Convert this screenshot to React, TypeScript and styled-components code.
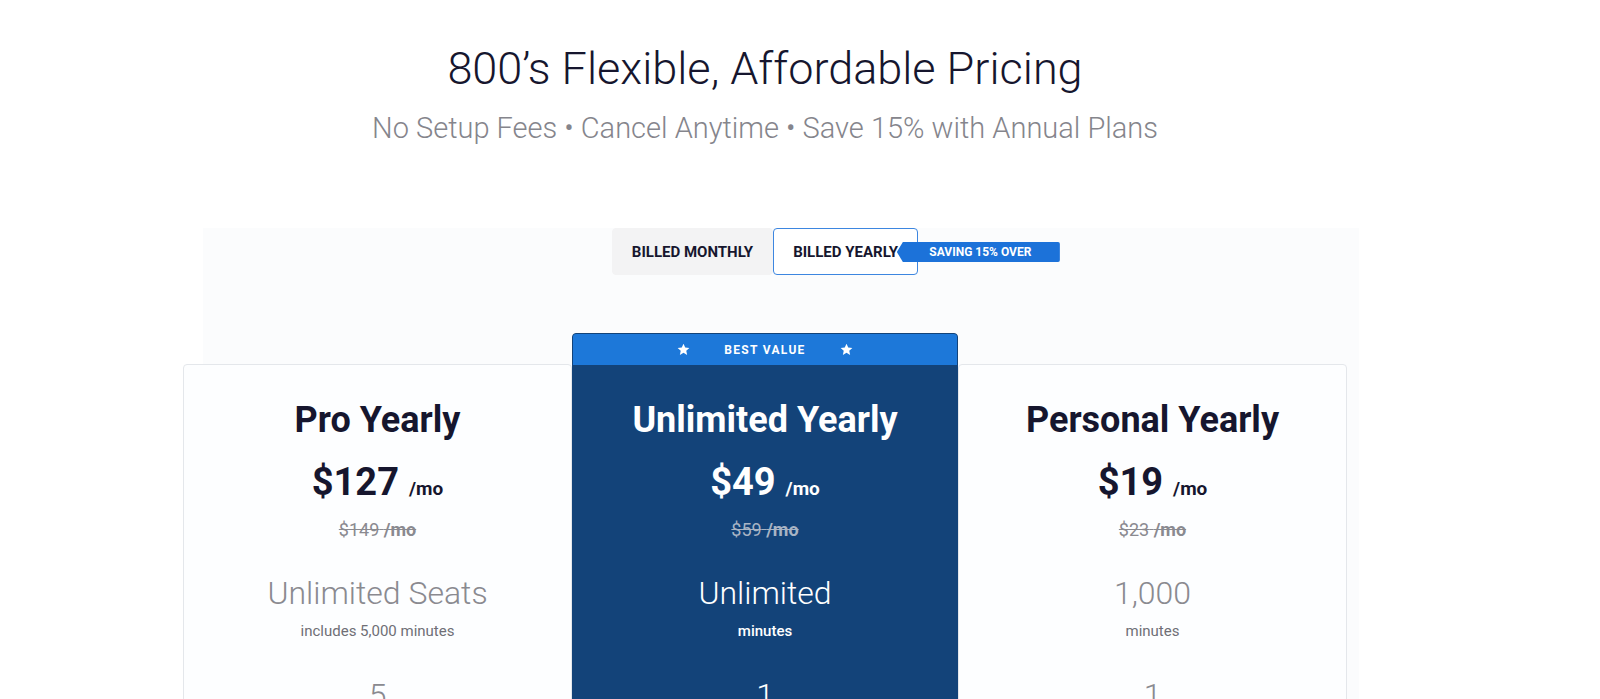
import React from 'react';
import styled, { createGlobalStyle } from 'styled-components';

const GlobalStyle = createGlobalStyle`
  html, body {
    margin: 0;
    padding: 0;
    background: #ffffff;
    font-family: Roboto, 'Noto Sans', sans-serif;
    overflow: hidden;
  }
`;

const Page = styled.div`
  width: 1530px;
  height: 699px;
  padding-top: 41px;
  box-sizing: border-box;
  overflow: hidden;
`;

const Header = styled.header`
  text-align: center;
`;

const Title = styled.h1`
  margin: 0;
  font-size: 45px;
  font-weight: 300;
  line-height: 56px;
  color: #16162e;
`;

const Subtitle = styled.p`
  margin: 12px 0 0;
  font-size: 29px;
  font-weight: 300;
  line-height: 38px;
  color: #85858c;
`;

const Section = styled.section`
  position: relative;
  isolation: isolate;
  width: 1164px;
  margin: 81px auto 0;

  &::before {
    content: '';
    position: absolute;
    left: 20px;
    right: -12px;
    top: 0;
    bottom: 0;
    background: #fbfcfd;
    z-index: -1;
  }
`;

const ToggleRow = styled.div`
  display: flex;
  justify-content: center;
`;

const Toggle = styled.div`
  display: flex;
  position: relative;
`;

const ToggleButton = styled.button<{ $active?: boolean }>`
  height: 47px;
  padding: 0 19px;
  font-family: Roboto, sans-serif;
  font-size: 15px;
  font-weight: 700;
  color: #16162e;
  background: ${(p) => (p.$active ? '#ffffff' : '#f3f3f4')};
  border: 1.5px solid ${(p) => (p.$active ? '#3d86e0' : '#f3f3f4')};
  border-radius: 4px;
  cursor: pointer;
`;

const SavingTag = styled.span`
  position: absolute;
  left: 285px;
  top: 14px;
  height: 20px;
  width: 163px;
  display: flex;
  align-items: center;
  justify-content: center;
  padding-left: 4px;
  box-sizing: border-box;
  background: #1c72d9;
  color: #ffffff;
  font-size: 12px;
  font-weight: 700;
  border-radius: 2px;
  clip-path: polygon(6px 0, 100% 0, 100% 100%, 6px 100%, 0 50%);
`;

const Cards = styled.div`
  display: grid;
  grid-template-columns: 389px 386px 389px;
  align-items: start;
  margin-top: 58px;
`;

const Card = styled.div<{ $featured?: boolean }>`
  display: flex;
  flex-direction: column;
  margin-top: ${(p) => (p.$featured ? '0' : '31px')};
  background: ${(p) => (p.$featured ? '#134379' : '#fdfeff')};
  border: 1px solid ${(p) => (p.$featured ? '#134379' : '#e4e7eb')};
  border-radius: 4px;
  height: 420px;
  overflow: hidden;
  color: ${(p) => (p.$featured ? '#ffffff' : '#16162e')};
`;

const Ribbon = styled.div`
  height: 31px;
  display: flex;
  align-items: center;
  justify-content: center;
  gap: 34px;
  background: #1d78d9;
  color: #ffffff;
  font-size: 12px;
  font-weight: 700;
  letter-spacing: 1.3px;
`;

const CardBody = styled.div`
  display: flex;
  flex-direction: column;
  align-items: center;
  padding-top: 33px;
`;

const PlanName = styled.h2`
  margin: 0;
  font-size: 36px;
  font-weight: 700;
  line-height: 44px;
`;

const Price = styled.div`
  margin-top: 17px;
  display: flex;
  align-items: baseline;
  gap: 10px;
  line-height: 46px;
`;

const Amount = styled.span`
  font-size: 38px;
  font-weight: 700;
`;

const Per = styled.span`
  font-size: 19px;
  font-weight: 700;
`;

const OldPrice = styled.s<{ $featured?: boolean }>`
  margin-top: 6px;
  font-size: 18px;
  line-height: 24px;
  color: ${(p) => (p.$featured ? '#a8b4c4' : '#8a8a90')};

  b {
    font-weight: 700;
  }
`;

const Feature = styled.div<{ $featured?: boolean }>`
  margin-top: 32px;
  font-size: 32px;
  font-weight: 300;
  line-height: 38px;
  color: ${(p) => (p.$featured ? '#ffffff' : '#8a8a90')};
`;

const FeatureNote = styled.div<{ $featured?: boolean }>`
  margin-top: 9px;
  font-size: 15px;
  font-weight: ${(p) => (p.$featured ? 500 : 400)};
  line-height: 20px;
  color: ${(p) => (p.$featured ? '#ffffff' : '#6f6f76')};
`;

const Count = styled(Feature)`
  margin-top: 35px;
`;

const Star = () => (
  <svg width="13" height="13" viewBox="0 0 24 24" fill="#ffffff">
    <path d="M12 1.5l3.2 7 7.6.8-5.7 5.2 1.6 7.5L12 18.2 5.3 22l1.6-7.5L1.2 9.3l7.6-.8z" />
  </svg>
);

type Plan = {
  name: string;
  price: string;
  old: string;
  feature: string;
  note: string;
  count: string;
  featured?: boolean;
};

const plans: Plan[] = [
  { name: 'Pro Yearly', price: '$127', old: '$149', feature: 'Unlimited Seats', note: 'includes 5,000 minutes', count: '5' },
  { name: 'Unlimited Yearly', price: '$49', old: '$59', feature: 'Unlimited', note: 'minutes', count: '1', featured: true },
  { name: 'Personal Yearly', price: '$19', old: '$23', feature: '1,000', note: 'minutes', count: '1' },
];

export default function App() {
  return (
    <>
      <GlobalStyle />
      <Page>
        <Header>
          <Title>800’s Flexible, Affordable Pricing</Title>
          <Subtitle>No Setup Fees • Cancel Anytime • Save 15% with Annual Plans</Subtitle>
        </Header>

        <Section>
          <ToggleRow>
            <Toggle>
              <ToggleButton>BILLED MONTHLY</ToggleButton>
              <ToggleButton $active>BILLED YEARLY</ToggleButton>
              <SavingTag>SAVING 15% OVER</SavingTag>
            </Toggle>
          </ToggleRow>

          <Cards>
            {plans.map((plan) => (
              <Card key={plan.name} $featured={plan.featured}>
                {plan.featured && (
                  <Ribbon>
                    <Star />
                    <span>BEST VALUE</span>
                    <Star />
                  </Ribbon>
                )}
                <CardBody>
                  <PlanName>{plan.name}</PlanName>
                  <Price>
                    <Amount>{plan.price}</Amount>
                    <Per>/mo</Per>
                  </Price>
                  <OldPrice $featured={plan.featured}>
                    {plan.old} <b>/mo</b>
                  </OldPrice>
                  <Feature $featured={plan.featured}>{plan.feature}</Feature>
                  <FeatureNote $featured={plan.featured}>{plan.note}</FeatureNote>
                  <Count $featured={plan.featured}>{plan.count}</Count>
                </CardBody>
              </Card>
            ))}
          </Cards>
        </Section>
      </Page>
    </>
  );
}
